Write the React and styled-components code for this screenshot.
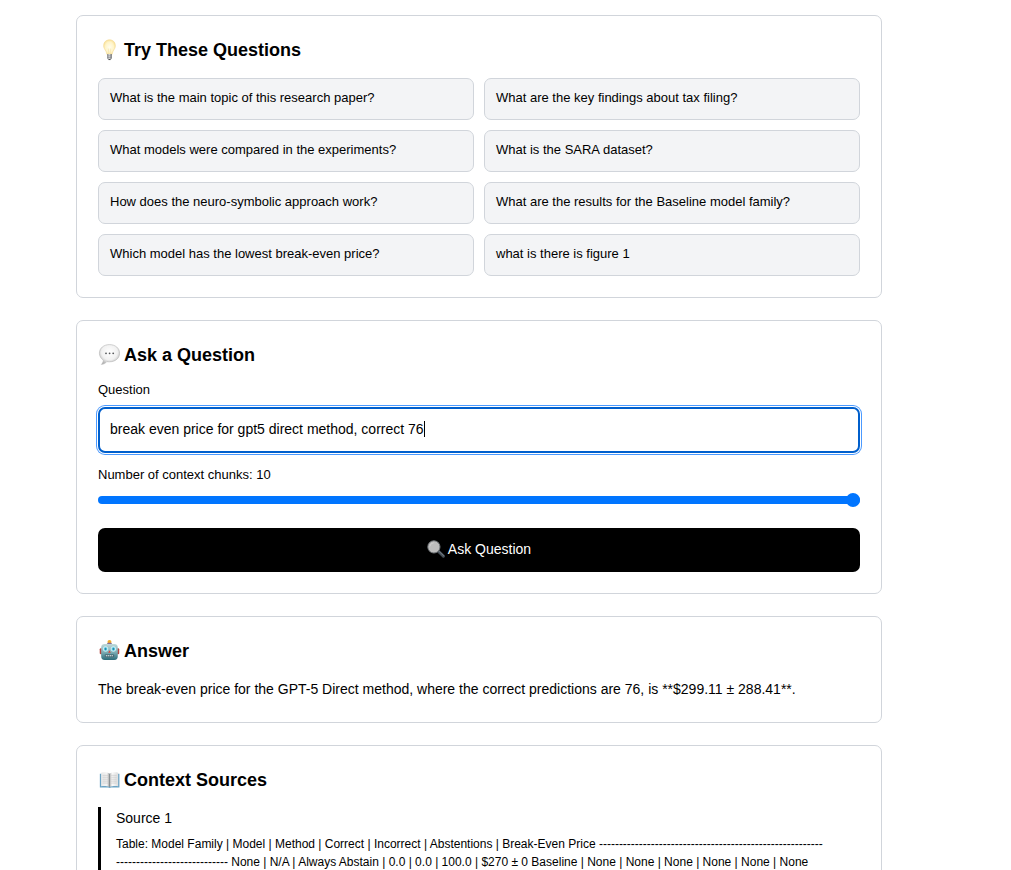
import React, { useLayoutEffect, useRef, useState } from "react";
import styled, { createGlobalStyle } from "styled-components";

const GlobalStyle = createGlobalStyle`
  *, *::before, *::after { box-sizing: border-box; }
  body {
    margin: 0;
    background: #fff;
    color: #000;
    font-family: "Liberation Sans", Arial, Helvetica, sans-serif;
    font-size: 14px;
  }
  button, input { font: inherit; }
`;

const Page = styled.main`
  display: flex;
  flex-direction: column;
  gap: 22px;
  padding: 15px 129px 22px 76px;
`;

const Card = styled.section`
  padding: 21px;
  border: 1px solid #d1d5db;
  border-radius: 7px;
  background: #fff;
`;

const Title = styled.h2`
  display: flex;
  align-items: center;
  gap: 4px;
  margin: 0;
  font-size: 18px;
  line-height: 26px;
  font-weight: 700;
`;

const Icon = styled.svg`
  flex: none;
  width: ${(p) => p.$size}px;
  height: ${(p) => p.$size}px;
`;

const QuestionGrid = styled.div`
  display: grid;
  grid-template-columns: 1fr 1fr;
  gap: 10px;
  margin-top: 15px;
`;

const QuestionButton = styled.button`
  padding: 10px 11px 12px;
  border: 1px solid #d1d5db;
  border-radius: 7px;
  background: #f3f4f6;
  color: #000;
  font-size: 13px;
  line-height: 18px;
  text-align: left;
  cursor: pointer;
`;

const Form = styled.form`
  display: flex;
  flex-direction: column;
  margin-top: 13px;
`;

const Label = styled.label`
  font-size: 13px;
  line-height: 18px;
`;

const InputWrap = styled.div`
  position: relative;
  margin: 8px 0 13px;
`;

const TextInput = styled.input`
  display: block;
  width: 100%;
  padding: 9px 10px 11px;
  border: 2px solid #005fcc;
  border-radius: 7px;
  outline: none;
  box-shadow: 0 0 0 1px #fff, 0 0 0 2px #4c9aff;
  background: #fff;
  color: #000;
  font-size: 14px;
  line-height: 22px;
  caret-color: transparent;
`;

const Caret = styled.span`
  position: absolute;
  top: 14px;
  width: 1px;
  height: 16px;
  background: #000;
  pointer-events: none;
`;

const Slider = styled.input`
  appearance: none;
  width: 100%;
  height: 14px;
  margin: 9px 0 21px;
  background: transparent;

  &::-webkit-slider-runnable-track {
    height: 8px;
    border-radius: 4px;
    background: linear-gradient(to right, #0075ff var(--fill), #e5e7eb var(--fill));
  }
  &::-webkit-slider-thumb {
    appearance: none;
    width: 14px;
    height: 14px;
    margin-top: -3px;
    border-radius: 50%;
    background: #0075ff;
  }
`;

const SubmitButton = styled.button`
  display: flex;
  align-items: center;
  justify-content: center;
  gap: 3px;
  height: 44px;
  padding: 0 0 3px;
  border: 0;
  border-radius: 7px;
  background: #000;
  color: #fff;
  font-size: 14px;
  cursor: pointer;
`;

const AnswerText = styled.p`
  margin: 13px 0 0;
  font-size: 14px;
  line-height: 24px;
`;

const Source = styled.article`
  margin-top: 14px;
  padding-left: 15px;
  border-left: 3px solid #000;
`;

const SourceTitle = styled.h3`
  margin: 0 0 6px;
  font-size: 14px;
  line-height: 22px;
  font-weight: 400;
`;

const SourceText = styled.p`
  margin: 0;
  font-size: 12px;
  line-height: 18px;
  white-space: pre-line;
`;

function BulbIcon() {
  return (
    <Icon $size={22} viewBox="0 0 22 22" aria-hidden="true">
      <defs>
        <radialGradient id="bulb" cx="50%" cy="50%" r="58%">
          <stop offset="0" stopColor="#fffdee" />
          <stop offset="0.6" stopColor="#fff4c8" />
          <stop offset="1" stopColor="#f7da88" />
        </radialGradient>
        <linearGradient id="socket" x1="0" x2="1">
          <stop offset="0" stopColor="#77797c" />
          <stop offset="0.45" stopColor="#e0e0df" />
          <stop offset="1" stopColor="#66686b" />
        </linearGradient>
      </defs>
      <path d="M11.5.8C7.900.8 5.600 3.300 5.600 6.700c0 2.500 1.400 3.700 2.300 5.600.6 1.300.7 2.900 1.300 3.400h4.600c.6-.5.7-2.100 1.300-3.400.9-1.900 2.300-3.100 2.300-5.600C17.400 3.300 15.100.8 11.500.8z" fill="url(#bulb)" stroke="#f1d68f" strokeWidth=".5" />
      <path d="M10.300 9.500l.6 6M12.700 9.500l-.6 6" stroke="#eed692" strokeWidth=".4" fill="none" />
      <path d="M9.200 15h4.600v4c0 .8-.7 1-1.100 1.700-.5.700-1.900.7-2.400 0-.4-.7-1.100-.9-1.100-1.700z" fill="url(#socket)" />
      <path d="M9.200 16.800h4.600M9.400 18.500h4.200" stroke="#808286" strokeWidth=".5" />
      <path d="M10.300 20h2.400l-.6 1h-1.200z" fill="#4f5154" />
    </Icon>
  );
}

function SpeechIcon() {
  return (
    <Icon $size={22} viewBox="0 0 22 22" aria-hidden="true">
      <defs>
        <radialGradient id="speech" cx="50%" cy="38%" r="65%">
          <stop offset="0" stopColor="#ffffff" />
          <stop offset="0.6" stopColor="#f1f1f1" />
          <stop offset="1" stopColor="#a9a9a9" />
        </radialGradient>
      </defs>
      <path d="M11.500.6C5.700.6 1.400 4.200 1.400 9.200c0 3 1.600 5.300 3.900 6.900.1 1.700-.8 3.200-1.900 4.300 2.200-.1 4.200-1.200 5.500-2.800.8.200 1.700.2 2.600.2 5.800 0 10.100-3.600 10.100-8.600S17.300.6 11.500.6z" fill="url(#speech)" stroke="#b5b5b5" strokeWidth=".6" />
      <g fill="#55575a">
        <circle cx="8" cy="9.300" r=".9" />
        <circle cx="11.600" cy="9.300" r=".9" />
        <circle cx="15.200" cy="9.300" r=".9" />
      </g>
    </Icon>
  );
}

function MagnifierIcon() {
  return (
    <Icon $size={18} viewBox="0 0 18 18" aria-hidden="true">
      <path d="M11.200 11.200l5.200 5" stroke="#454e56" strokeWidth="3" strokeLinecap="round" />
      <path d="M12.300 11.600l4.300 4.100" stroke="#848d94" strokeWidth=".8" strokeLinecap="round" />
      <circle cx="6.900" cy="6.900" r="6.100" fill="#bdbdbd" stroke="#73777b" strokeWidth="1" />
      <path d="M2.800 6.500a4.300 4.300 0 0 1 4-3.700" stroke="#cfcfcf" strokeWidth="1" fill="none" />
    </Icon>
  );
}

function RobotIcon() {
  return (
    <Icon $size={22} viewBox="-1 1 23 23" aria-hidden="true">
      <defs>
        <linearGradient id="robot" x1="0" y1="0" x2="0" y2="1">
          <stop offset="0" stopColor="#bfd9da" />
          <stop offset="0.5" stopColor="#7eafb6" />
          <stop offset="1" stopColor="#2b6a78" />
        </linearGradient>
      </defs>
      <rect x=".8" y="9.500" width="3" height="6.500" rx="1.200" fill="#b5443f" />
      <rect x="18.200" y="9.500" width="3" height="6.500" rx="1.200" fill="#b5443f" />
      <path d="M8.500 4.300h5l.5 2H8z" fill="#7c8f98" />
      <circle cx="11" cy="3.200" r="2.100" fill="#f0ae2d" />
      <path d="M9.100 3.900h3.800v1.500H9.100z" fill="#8f6796" />
      <path d="M6 5.200h10c2.700 0 3.700 1.600 3.700 4v8.600c0 2.600-1.200 4.200-3.700 4.200H6c-2.500 0-3.700-1.600-3.700-4.200V9.200c0-2.400 1-4 3.700-4z" fill="url(#robot)" />
      <circle cx="6.900" cy="10.400" r="2.400" fill="#52c9e8" stroke="#e6f6f8" strokeWidth=".9" />
      <circle cx="15.100" cy="10.400" r="2.400" fill="#52c9e8" stroke="#e6f6f8" strokeWidth=".9" />
      <circle cx="6.900" cy="10.400" r=".8" fill="#276477" />
      <circle cx="15.100" cy="10.400" r=".8" fill="#276477" />
      <path d="M11 11.800l1.400 2.400H9.600z" fill="#d84437" />
      <rect x="6" y="16" width="10" height="3" rx="1.300" fill="#486b75" />
      <path d="M7.200 17.500h7.600" stroke="#e5eeee" strokeWidth="1.200" strokeDasharray="1.400 .6" />
    </Icon>
  );
}

function BookIcon() {
  return (
    <Icon $size={22} viewBox="-1 -.5 22.700 22.700" aria-hidden="true">
      <defs>
        <linearGradient id="leaf" x1="0" x2="1">
          <stop offset="0" stopColor="#e9e9e9" />
          <stop offset="0.7" stopColor="#f5f5f5" />
          <stop offset="1" stopColor="#9c9c9c" />
        </linearGradient>
        <linearGradient id="leafRight" x1="0" x2="1">
          <stop offset="0" stopColor="#bcbcbc" />
          <stop offset="0.3" stopColor="#fafafa" />
          <stop offset="1" stopColor="#dedede" />
        </linearGradient>
      </defs>
      <path d="M.9 4.500h20.200v14H12.500l-1.500.6-1.500-.6H.9z" fill="#6ba3c4" />
      <path d="M2.200 3.300c3-.6 6.500-.5 8.800 1.200v13.600c-2.500-1.200-5.800-1.200-8.800-.9z" fill="url(#leaf)" />
      <path d="M19.800 3.300c-3-.6-6.500-.5-8.800 1.200v13.600c2.500-1.200 5.800-1.200 8.800-.9z" fill="url(#leafRight)" />
      <path d="M11 4.500v13.600" stroke="#777" strokeWidth=".6" />
      <path d="M3.700 6h5.600M3.700 8h5.600M3.700 10h5.600M3.700 12h5.600M3.700 14h5.600M12.700 6h5.600M12.700 8h5.600M12.700 10h5.600M12.700 12h5.600M12.700 14h5.600" stroke="#bdbdbd" strokeWidth=".6" />
    </Icon>
  );
}

const QUESTIONS = [
  "What is the main topic of this research paper?",
  "What are the key findings about tax filing?",
  "What models were compared in the experiments?",
  "What is the SARA dataset?",
  "How does the neuro-symbolic approach work?",
  "What are the results for the Baseline model family?",
  "Which model has the lowest break-even price?",
  "what is there is figure 1",
];

const SOURCES = [
  {
    title: "Source 1",
    text:
      "Table: Model Family | Model | Method | Correct | Incorrect | Abstentions | Break-Even Price " +
      "-".repeat(56) +
      "\n" +
      "-".repeat(28) +
      " None | N/A | Always Abstain | 0.0 | 0.0 | 100.0 | $270 ± 0 Baseline | None | None | None | None | None | None",
  },
];

function QuestionInput({ id, value, onChange }) {
  const ref = useRef(null);
  const [caretX, setCaretX] = useState(0);

  useLayoutEffect(() => {
    const style = getComputedStyle(ref.current);
    const ctx = document.createElement("canvas").getContext("2d");
    ctx.font = `${style.fontSize} ${style.fontFamily}`;
    setCaretX(Math.round(ctx.measureText(value).width) + 12);
  }, [value]);

  return (
    <InputWrap>
      <TextInput
        ref={ref}
        id={id}
        type="text"
        autoComplete="off"
        value={value}
        onChange={(e) => onChange(e.target.value)}
      />
      <Caret aria-hidden="true" style={{ left: caretX }} />
    </InputWrap>
  );
}

export default function App() {
  const [question, setQuestion] = useState("break even price for gpt5 direct method, correct 76");
  const [chunks, setChunks] = useState(10);

  return (
    <>
      <GlobalStyle />
      <Page>
        <Card>
          <Title><BulbIcon />Try These Questions</Title>
          <QuestionGrid>
            {QUESTIONS.map((q) => (
              <QuestionButton key={q} type="button" onClick={() => setQuestion(q)}>{q}</QuestionButton>
            ))}
          </QuestionGrid>
        </Card>

        <Card>
          <Title><SpeechIcon />Ask a Question</Title>
          <Form onSubmit={(e) => e.preventDefault()}>
            <Label htmlFor="question">Question</Label>
            <QuestionInput id="question" value={question} onChange={setQuestion} />
            <Label htmlFor="chunks">Number of context chunks: {chunks}</Label>
            <Slider
              id="chunks"
              type="range"
              min="1"
              max="10"
              value={chunks}
              onChange={(e) => setChunks(Number(e.target.value))}
              style={{ "--fill": `${((chunks - 1) / 9) * 100}%` }}
            />
            <SubmitButton type="submit"><MagnifierIcon />Ask Question</SubmitButton>
          </Form>
        </Card>

        <Card>
          <Title><RobotIcon />Answer</Title>
          <AnswerText>
            The break-even price for the GPT-5 Direct method, where the correct predictions are 76, is **$299.11 ± 288.41**.
          </AnswerText>
        </Card>

        <Card>
          <Title><BookIcon />Context Sources</Title>
          {SOURCES.map((s) => (
            <Source key={s.title}>
              <SourceTitle>{s.title}</SourceTitle>
              <SourceText>{s.text}</SourceText>
            </Source>
          ))}
        </Card>
      </Page>
    </>
  );
}
